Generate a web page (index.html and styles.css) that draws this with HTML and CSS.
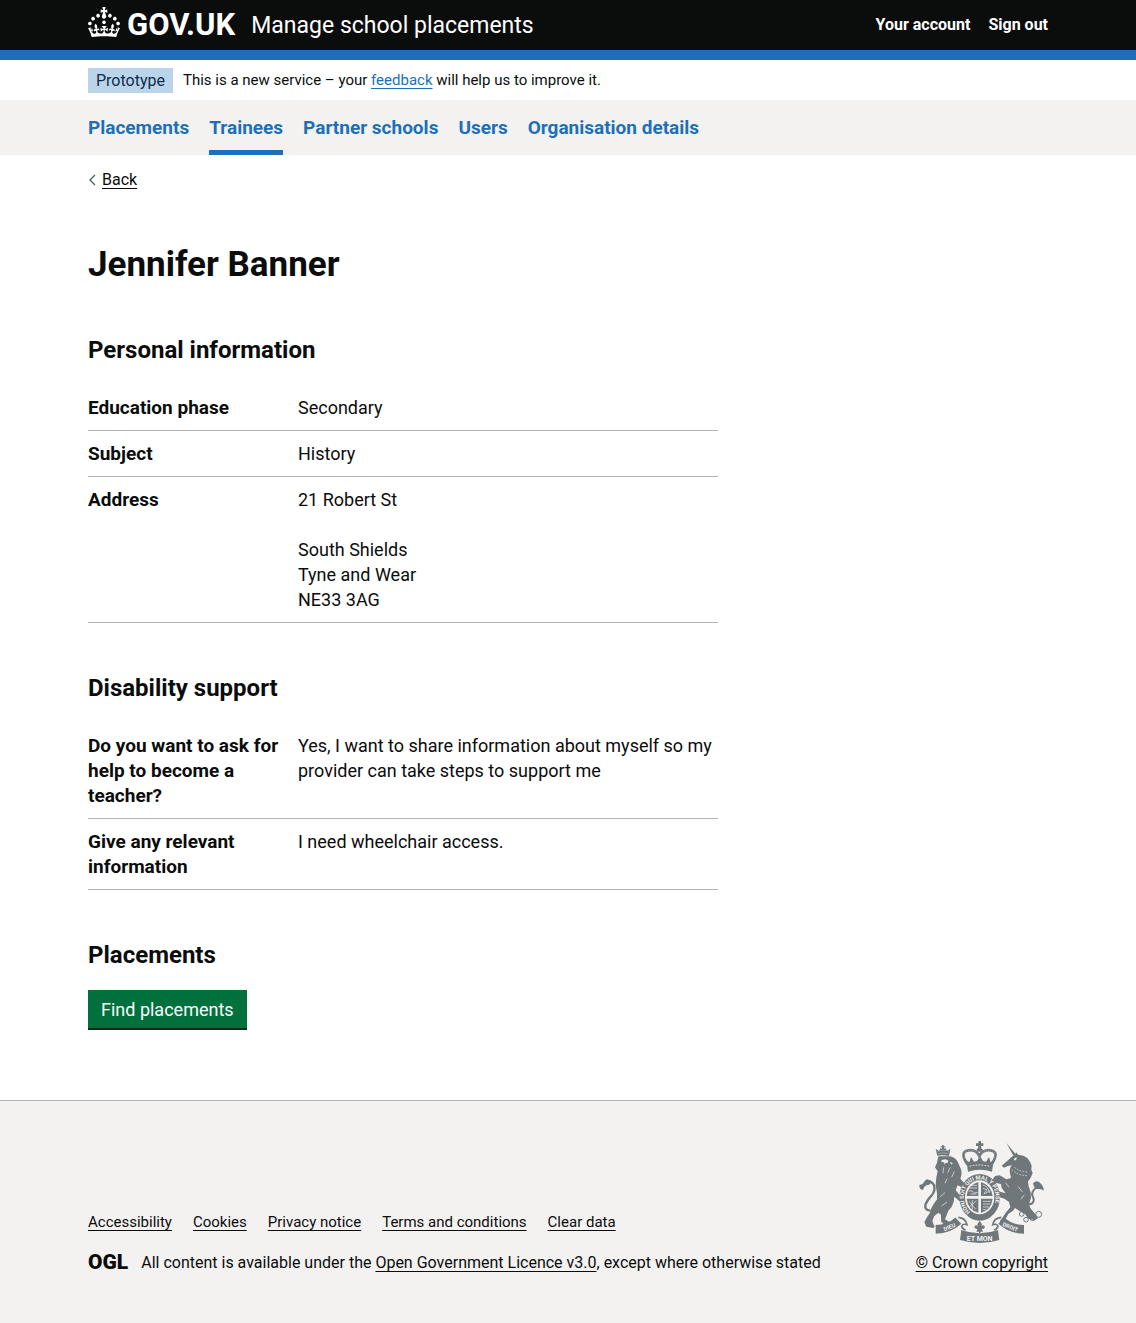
FILE: index.html
```html
<!DOCTYPE html>
<html lang="en">
<head>
<meta charset="utf-8">
<meta name="viewport" content="width=device-width, initial-scale=1">
<title>Jennifer Banner - Manage school placements - GOV.UK</title>
<link rel="stylesheet" href="styles.css">
</head>
<body>
<header class="header">
  <div class="container header-inner">
    <a class="logo" href="#" aria-label="GOV.UK">
      <svg class="logo-crown" viewBox="0 0 32 30" width="32" height="30" aria-hidden="true"><path fill="currentColor" d="M22.6 10.4c-1 .4-2-.1-2.4-1-.4-.9.1-2 1-2.4.9-.4 2 .1 2.4 1s-.1 2-1 2.4m-5.9 6.7c-.9.4-2-.1-2.4-1-.4-.9.1-2 1-2.4.9-.4 2 .1 2.4 1s-.1 2-1 2.4m10.8-3.7c-1 .4-2-.1-2.4-1-.4-.9.1-2 1-2.4.9-.4 2 .1 2.4 1s0 2-1 2.4m3.3 4.8c-1 .4-2-.1-2.4-1-.4-.9.1-2 1-2.4.9-.4 2 .1 2.4 1s-.1 2-1 2.4M17 4.7l2.3 1.2V2.5l-2.3.7-.2-.2.9-3h-3.4l.9 3-.2.2c-.1.1-2.3-.7-2.3-.7v3.4L15 4.7c.1.1.1.2.2.2l-1.3 4c-.1.2-.1.4-.1.6 0 1.1.8 2 1.9 2.2h.7c1-.2 1.9-1.1 1.9-2.1 0-.2 0-.4-.1-.6l-1.3-4c-.1-.2 0-.2.1-.3m-7.6 5.7c.9.4 2-.1 2.4-1 .4-.9-.1-2-1-2.4-.9-.4-2 .1-2.4 1s0 2 1 2.4m-5 3c.9.4 2-.1 2.4-1 .4-.9-.1-2-1-2.4-.9-.4-2 .1-2.4 1s.1 2 1 2.4m-3.2 4.8c.9.4 2-.1 2.4-1 .4-.9-.1-2-1-2.4-.9-.4-2 .1-2.4 1s0 2 1 2.4m14.8 11c4.4 0 8.6.3 12.3.8 1.1-4.5 2.4-7 3.7-8.8l-2.5-.9c.2 1.3.3 1.9 0 2.7-.4-.4-.8-1.1-1.1-2.3l-1.2 4c.7-.5 1.3-.8 2-.9-1.1 2.5-2.6 3.1-3.5 3-1.1-.2-1.7-1.2-1.5-2.1.3-1.2 1.5-1.5 2.1-.1 1.1-2.3-.8-3-2-2.3 1.9-1.9 2.1-3.5.6-5.6-2.1 1.6-2.1 3.2-1.2 5.5-1.2-1.4-3.2-.6-2.5 1.6.9-1.4 2.1-.5 1.9.8-.2 1.1-1.7 2.1-3.5 1.9-2.7-.2-2.9-2.1-2.9-3.6.7-.1 1.9.5 2.9 1.9l.4-4.3c-1.1 1.1-2.1 1.4-3.2 1.4.4-1.2 2.1-3 2.1-3h-5.4s1.7 1.9 2.1 3c-1.1 0-2.1-.2-3.2-1.4l.4 4.3c1-1.4 2.2-2 2.9-1.9-.1 1.5-.2 3.4-2.9 3.6-1.9.2-3.4-.8-3.5-1.9-.2-1.3 1-2.2 1.9-.8.7-2.3-1.2-3-2.5-1.6.9-2.2.9-3.9-1.2-5.5-1.5 2-1.3 3.7.6 5.6-1.2-.7-3.1 0-2 2.3.6-1.4 1.8-1.1 2.1.1.2.9-.3 1.9-1.5 2.1-.9.2-2.4-.5-3.5-3 .6 0 1.2.3 2 .9l-1.2-4c-.3 1.1-.7 1.9-1.1 2.3-.3-.8-.2-1.4 0-2.7l-2.9.9C1.3 23 2.6 25.5 3.7 30c3.7-.5 7.9-.8 12.3-.8"/></svg>
      <span class="logo-text">GOV.UK</span>
    </a>
    <a class="service-name" href="#">Manage school placements</a>
    <nav class="account" aria-label="Account">
      <a href="#">Your account</a>
      <a href="#">Sign out</a>
    </nav>
  </div>
</header>

<div class="container phase-banner">
  <strong class="tag">Prototype</strong>
  <span>This is a new service – your <a class="link" href="#">feedback</a> will help us to improve it.</span>
</div>

<nav class="primary-nav" aria-label="Primary">
  <ul class="container primary-list">
    <li><a href="#">Placements</a></li>
    <li><a class="current" href="#" aria-current="page">Trainees</a></li>
    <li><a href="#">Partner schools</a></li>
    <li><a href="#">Users</a></li>
    <li><a href="#">Organisation details</a></li>
  </ul>
</nav>

<div class="container">
  <a class="back-link" href="#">
    <svg viewBox="0 0 8 12" width="8" height="12" aria-hidden="true"><path d="M7 1 2 6l5 5" fill="none" stroke="#505a5f" stroke-width="1.3"/></svg>
    <span>Back</span>
  </a>
  <main class="main">
    <div class="two-thirds">
      <h1>Jennifer Banner</h1>

      <section>
        <h2>Personal information</h2>
        <dl class="summary">
          <div class="row"><dt>Education phase</dt><dd>Secondary</dd></div>
          <div class="row"><dt>Subject</dt><dd>History</dd></div>
          <div class="row"><dt>Address</dt><dd>21 Robert St<br><br>South Shields<br>Tyne and Wear<br>NE33 3AG</dd></div>
        </dl>
      </section>

      <section>
        <h2>Disability support</h2>
        <dl class="summary">
          <div class="row"><dt>Do you want to ask for help to become a teacher?</dt><dd>Yes, I want to share information about myself so my provider can take steps to support me</dd></div>
          <div class="row"><dt>Give any relevant information</dt><dd>I need wheelchair access.</dd></div>
        </dl>
      </section>

      <section>
        <h2>Placements</h2>
        <button class="button" type="button">Find placements</button>
      </section>
    </div>
  </main>
</div>

<footer class="footer">
  <div class="container footer-inner">
    <div class="footer-meta">
      <ul class="footer-links">
        <li><a href="#">Accessibility</a></li>
        <li><a href="#">Cookies</a></li>
        <li><a href="#">Privacy notice</a></li>
        <li><a href="#">Terms and conditions</a></li>
        <li><a href="#">Clear data</a></li>
      </ul>
      <div class="licence">
        <span class="ogl" aria-hidden="true">OGL</span>
        <span>All content is available under the <a href="#">Open Government Licence v3.0</a>, except where otherwise stated</span>
      </div>
    </div>
    <a class="copyright" href="#">
      <svg class="crest" viewBox="30 33 375 306" width="125" height="102" aria-hidden="true">
        <g fill="#6f777b">
          <!-- lion -->
          <path d="M88 79H124Q142 84 148 100L156 118Q160 134 154 146L166 160Q168 170 158 172L146 166 140 180 152 196 160 206Q158 216 150 212L136 200 134 216Q130 232 118 242L112 258 108 268 122 276 136 282Q142 290 134 292L108 288 96 274 96 254 88 248 76 258 70 272 74 284Q80 290 72 294L52 290 46 276 54 262 62 250 66 236 74 222 84 208 84 190 80 166 82 142 86 124 78 112 84 98Z"/>
          <path d="M85 78 80 57l10 5 5-8 4 2v-4h-4v-3h4v-3h6v3h4v3h-4v4l4-2 5 8 10-5-4 21q-20-5-40 0z"/>
          <!-- unicorn -->
          <path d="m292 39 30 36-7 5zM298 90l13-12 8-2 2-9 7 7 15 3 12 7 8 11 5 12-1 12 4 10-6 14-8 12 2 14 6 18 1 16-6 20 4 12 14 16q8 8 8 14l-8 6-20-5-10-14-18-10-12-8-6 8-14 10-8 14-6 14-10 0q-4-8 6-16l10-16 14-16-4-16-14-10-18-6-18-4q-10 0-10-8l6-8 16 0 14 6 14 4-12-16-2-12-18-4-8-8 8-12 14-2 20 12 14-4-4-20 2-12 5-6-12 2-12 5-7-6z"/>
          <!-- motto ribbon and royal crown -->
          <path d="M157 300q55 20 110 0l4 30q-58 18-118 0z"/>
          <path d="M209 33h7v7h7v8h-7l1 7 5 4-4 6h-12l-4-6 5-4 1-7h-7v-8h7z"/>
          <path d="M172 91l9 6 5-16 9 14 9-2 9-15 9 15 9 2 9-14 5 16 9-6-5 34q-36-12-72 0z"/>
          <ellipse cx="212" cy="202" rx="61" ry="70"/>
        </g>
        <g fill="none" stroke="#6f777b">
          <path d="M64 242q-20-2-14-20 6-14 18-26 12-14 7-30-8-16-24-12" stroke-width="7"/>
          <path d="M54 148q14 2 10 14-6 4-12 4-8 4-10 14-12-2-11-16 10 2 14-8 4-6 9-8z" fill="#6f777b" stroke="none"/>
          <path d="M352 222q24 4 22-16-10-16 2-28 6-8 14-4" stroke-width="6"/>
          <path d="M372 160q12-12 22 0 8 6 11 22-10-8-18-4-12-2-15-18z" fill="#6f777b" stroke="none"/>
          <path d="M176 104q-26-38 2-43 24-3 33 18 10-21 34-18 28 5 2 43" stroke-width="8"/>
          <path d="M80 298q40 0 68-26M345 298q-40 0-68-26" stroke-width="26"/>
          <path d="M148 262q22 2 26 22-12-4-16 4 2 10 12 12M277 262q-22 2-26 22 12-4 16 4-2 10-12 12" stroke-width="5"/>
          <g stroke-width="3"><circle cx="338" cy="252" r="7"/><circle cx="351" cy="269" r="7"/><circle cx="371" cy="264" r="8"/><circle cx="389" cy="253" r="9"/></g>
        </g>
        <g fill="#f3f2f1">
          <path d="m98 90 12-2 8 4-2 7-6-1-3 6-2-7-8-1zM122 95l9 5-3 4zM314 87l8-5 1 5-5 5z"/>
          <ellipse cx="212" cy="202" rx="44" ry="51"/>
        </g>
        <path fill="#6f777b" d="M173 198q2-32 35-42v42zM216 156q31 10 35 42h-35zM173 206h35v42q-31-8-35-42zM216 206h35q-4 34-35 42zM212 272l7 11-2 6q6-6 10 0 2 8-8 8l3 8h-7l-3 8-3-8h-7l3-8q-10 0-8-8 4-6 10 0l-2-6z"/>
        <g fill="none" stroke="#f3f2f1" stroke-width="2">
          <path d="M180 174h24M178 183h12l6 6 10-2M188 166h16M184 192h18M221 165q18 4 20 24M244 182l-20 10M222 175l12 4-8 10M180 214l20 24M202 212l-20 18M190 210v28M222 214h24M222 222h22M222 231h18M222 239h10"/>
          <path d="M182 109q30-8 60 0" stroke-width="3" stroke-dasharray="5 4"/>
          <path d="M168 84q-2-24 12-24 20-2 31 22M256 84q2-24-12-24-20-2-31 22" stroke-dasharray="2 5"/>
          <path d="M86 64q16-6 34 0M88 71q16-4 30 0" stroke-dasharray="3 3"/>
          <path d="M308 119q20 18 48 18M316 112q18 14 42 14" stroke-dasharray="5 4"/>
          <path d="M124 112l-8 16M136 124l-8 18M104 112l-2 18M114 146l-6 14M94 200l14-12M98 228l16-12M328 170l12 16M290 158l10 14M336 208l10-14"/>
        </g>
        <path id="garter" d="M184 246a48 54 0 1 1 56 0" fill="none"/>
        <g class="motto">
          <text><textPath href="#garter">HONI SOIT QUI MAL Y PENSE</textPath></text>
          <text x="121" y="297" text-anchor="middle" transform="rotate(-23 121 290)">DIEU</text>
          <text x="212" y="332" text-anchor="middle" class="motto-mid">ET MON</text>
          <text x="304" y="297" text-anchor="middle" transform="rotate(23 304 290)">DROIT</text>
        </g>
      </svg>
      <span>© Crown copyright</span>
    </a>
  </div>
</footer>
</body>
</html>
```

FILE: styles.css
```css
*, *::before, *::after { box-sizing: border-box; }

body {
  margin: 0;
  background: #fff;
  color: #0b0c0c;
  font-family: Roboto, "Liberation Sans", sans-serif;
  font-size: 18px;
  line-height: 25px;
}

a { color: inherit; text-underline-offset: 3px; text-decoration-thickness: 1px; }
h1, h2, dl, dd, ul { margin: 0; padding: 0; }
ul { list-style: none; }

.container { max-width: 960px; margin: 0 auto; }

/* Header */
.header { background: #0b0c0c; color: #fff; border-bottom: 10px solid #1d70b8; }
.header-inner { display: flex; align-items: center; height: 50px; }
.header a { text-decoration: none; }
.logo { display: flex; align-items: center; gap: 7px; margin-right: 16px; }
.logo-crown { display: block; margin-bottom: 6px; }
.logo-text { font-size: 31px; font-weight: 700; line-height: 50px; }
.service-name { font-size: 23px; line-height: 50px; padding-top: 2px; }
.account { display: flex; gap: 18px; margin-left: auto; font-size: 16px; font-weight: 700; line-height: 24px; }

/* Phase banner */
.phase-banner { display: flex; align-items: center; gap: 10px; padding: 8px 0 7px; font-size: 15px; }
.tag { padding: 0 8px; background: #bbd4ea; color: #0c2d4a; font-size: 16px; font-weight: 400; }
.link { color: #1d70b8; }

/* Primary navigation */
.primary-nav { background: #f3f2f1; }
.primary-list { display: flex; gap: 20px; color: #1d70b8; font-size: 19px; font-weight: 700; }
.primary-list a { display: block; padding: 15px 0 10px; border-bottom: 5px solid transparent; text-decoration: none; }
.primary-list .current { border-bottom-color: #1d70b8; }

/* Page content */
.back-link { display: inline-flex; align-items: center; gap: 6px; margin-top: 15px; font-size: 16px; line-height: 20px; text-decoration: none; vertical-align: top; }
.back-link span { text-decoration: underline; text-decoration-thickness: 1px; }

.main { display: grid; grid-template-columns: repeat(3, 1fr); column-gap: 30px; padding: 55px 0 70px; }
.two-thirds { grid-column: span 2; display: flex; flex-direction: column; gap: 50px; }
h1 { font-size: 35px; line-height: 40px; }
h2 { margin-bottom: 20px; font-size: 24px; line-height: 30px; }

.row { display: grid; grid-template-columns: 1fr 2fr; padding: 10px 0; border-bottom: 1px solid #b1b4b6; }
.row dt { padding-right: 16px; font-size: 19px; font-weight: 700; }

.button {
  display: block;
  margin-bottom: 2px;
  padding: 7px 13px 6px;
  border: 0;
  background: #00703c;
  box-shadow: 0 2px 0 #002d18;
  color: #fff;
  font: inherit;
}

/* Footer */
.footer { padding: 40px 0 48px; background: #f3f2f1; border-top: 1px solid #b1b4b6; font-size: 16px; }
.footer-inner { display: flex; justify-content: space-between; align-items: flex-end; }
.footer-links { display: flex; gap: 21px; margin-bottom: 15px; font-size: 15px; }
.licence { display: flex; align-items: center; gap: 13px; }
.ogl { font-size: 21px; font-weight: 900; }
.copyright { display: flex; flex-direction: column; align-items: center; gap: 7px; }
.crest { display: block; }
.motto { fill: #f3f2f1; font-size: 17px; font-weight: 700; }
.motto-mid { font-size: 21px; }
```
